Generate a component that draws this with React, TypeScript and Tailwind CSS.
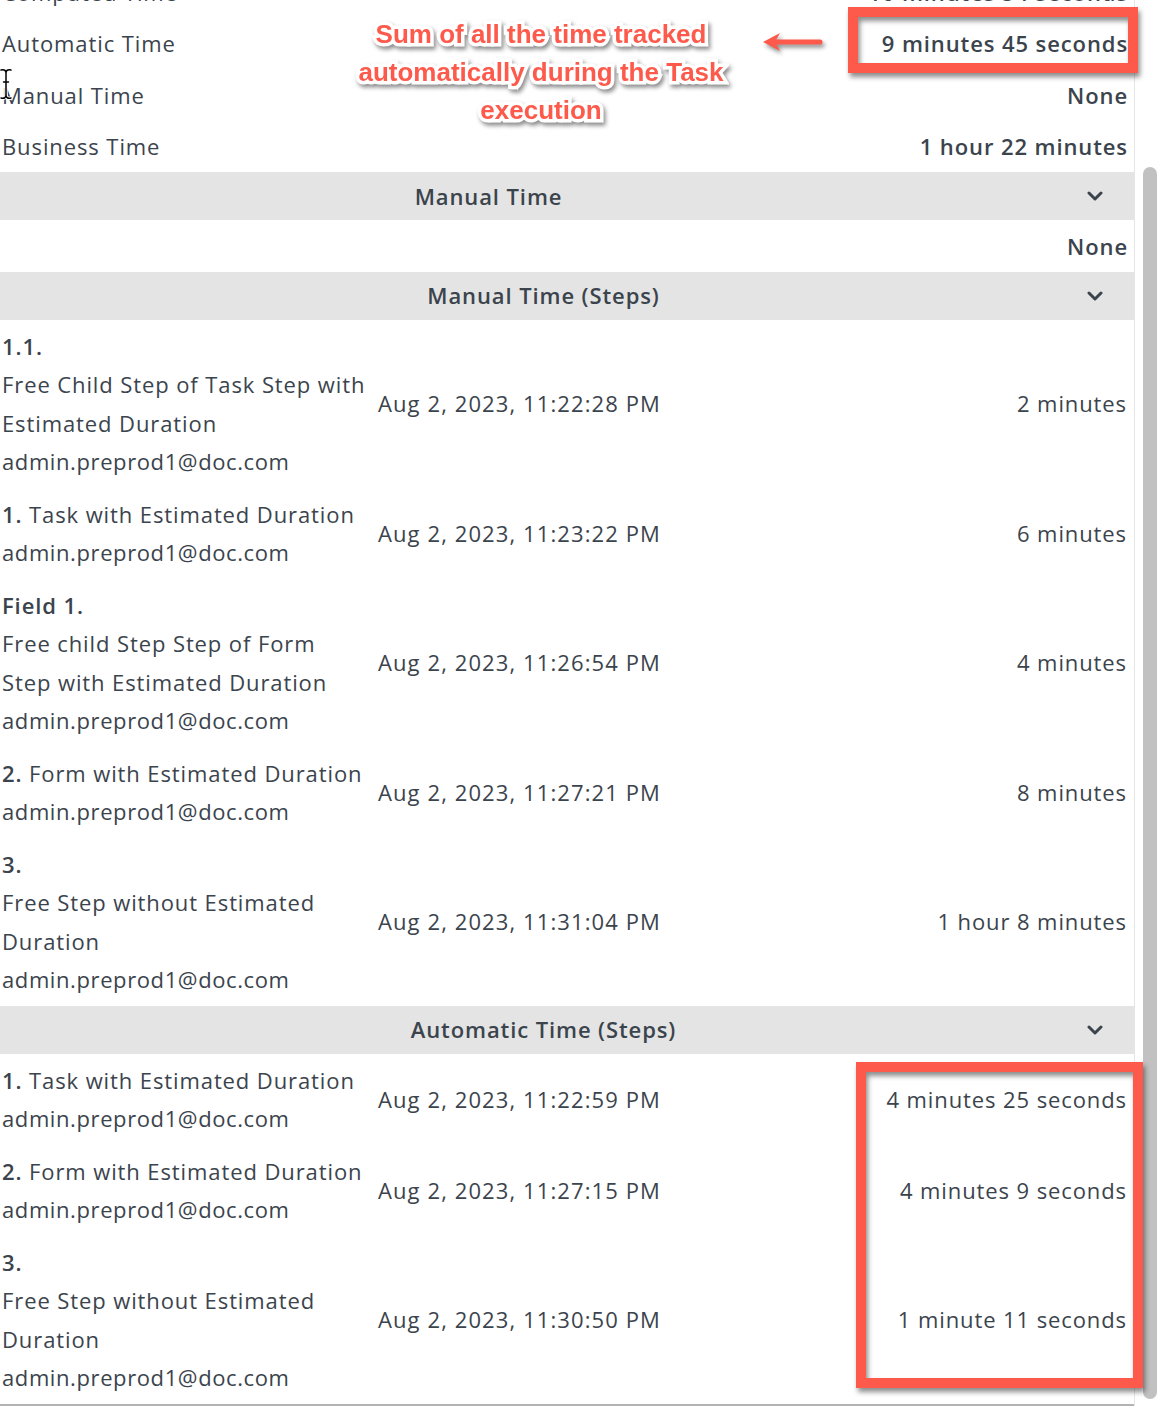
import React from "react";

interface StepRow {
  num: string;
  numOwnLine: boolean;
  lines: string[];
  date: string;
  duration: string;
}

const EMAIL = "admin.preprod1@doc.com";

const MANUAL_STEPS: StepRow[] = [
  { num: "1.1.", numOwnLine: true, lines: ["Free Child Step of Task Step with", "Estimated Duration"], date: "Aug 2, 2023, 11:22:28 PM", duration: "2 minutes" },
  { num: "1.", numOwnLine: false, lines: ["Task with Estimated Duration"], date: "Aug 2, 2023, 11:23:22 PM", duration: "6 minutes" },
  { num: "Field 1.", numOwnLine: true, lines: ["Free child Step Step of Form", "Step with Estimated Duration"], date: "Aug 2, 2023, 11:26:54 PM", duration: "4 minutes" },
  { num: "2.", numOwnLine: false, lines: ["Form with Estimated Duration"], date: "Aug 2, 2023, 11:27:21 PM", duration: "8 minutes" },
  { num: "3.", numOwnLine: true, lines: ["Free Step without Estimated", "Duration"], date: "Aug 2, 2023, 11:31:04 PM", duration: "1 hour 8 minutes" },
];

const AUTO_STEPS: StepRow[] = [
  { num: "1.", numOwnLine: false, lines: ["Task with Estimated Duration"], date: "Aug 2, 2023, 11:22:59 PM", duration: "4 minutes 25 seconds" },
  { num: "2.", numOwnLine: false, lines: ["Form with Estimated Duration"], date: "Aug 2, 2023, 11:27:15 PM", duration: "4 minutes 9 seconds" },
  { num: "3.", numOwnLine: true, lines: ["Free Step without Estimated", "Duration"], date: "Aug 2, 2023, 11:30:50 PM", duration: "1 minute 11 seconds" },
];

const SUMMARY = [
  { label: "Computed Time", value: "10 minutes 54 seconds" },
  { label: "Automatic Time", value: "9 minutes 45 seconds" },
  { label: "Manual Time", value: "None" },
  { label: "Business Time", value: "1 hour 22 minutes" },
];

function Chevron() {
  return (
    <svg width="16" height="10" viewBox="0 0 16 10" className="mr-[31px] shrink-0">
      <polyline points="2,2 8,8 14,2" fill="none" stroke="#3b444d" strokeWidth="3" strokeLinecap="round" strokeLinejoin="round" />
    </svg>
  );
}

function SectionHeader({ title, offset }: { title: string; offset?: boolean }) {
  return (
    <div className="flex h-12 items-center bg-[#e4e4e4]">
      <div className={`flex-1 text-center font-semibold ${offset ? "pr-[110px]" : ""}`}>{title}</div>
      <Chevron />
    </div>
  );
}

function StepRows({ rows }: { rows: StepRow[] }) {
  return (
    <div>
      {rows.map((r, i) => (
        <div key={i} className="flex items-center py-[7px] pl-[2px] pr-[7px]">
          <div className="w-[374px] shrink-0">
            {r.numOwnLine ? (
              <>
                <div className="font-semibold">{r.num}</div>
                {r.lines.map(l => <div key={l} className="whitespace-nowrap">{l}</div>)}
              </>
            ) : (
              <div className="whitespace-nowrap"><span className="font-semibold">{r.num}</span> {r.lines[0]}</div>
            )}
            <div className="tracking-[0.6px]">{EMAIL}</div>
          </div>
          <div className="flex-1 pl-[2px] tracking-[1.1px]">{r.date}</div>
          <div className="text-right">{r.duration}</div>
        </div>
      ))}
    </div>
  );
}

export default function App() {
  return (
    <div className="relative flex h-[1406px] overflow-hidden bg-white text-[22px] leading-[38.5px] tracking-[0.9px] text-[#3b444d] [font-family:'Open_Sans',Lato,sans-serif]">
      {/* Main content (scrolled) */}
      <div className="-mt-[34px] w-[1134px] shrink-0">
        {SUMMARY.map(s => (
          <div key={s.label} className="flex justify-between py-[6.5px] pl-[2px] pr-[6px]">
            <span>{s.label}</span>
            <span className="font-semibold">{s.value}</span>
          </div>
        ))}

        <SectionHeader title="Manual Time" offset />
        <div className="py-[6.5px] pr-[6px] text-right font-semibold">None</div>

        <SectionHeader title="Manual Time (Steps)" />
        <StepRows rows={MANUAL_STEPS} />

        <SectionHeader title="Automatic Time (Steps)" />
        <StepRows rows={AUTO_STEPS} />
        <div className="h-[3px] bg-[#b3b3b3]" />
      </div>

      {/* Scroll gutter */}
      <div className="flex-1 border-l border-[#e6e6e6]">
        <div className="ml-[8px] mt-[167px] h-[1232px] w-[14px] rounded-full bg-[#c1c1c1]" />
      </div>

      {/* Annotations */}
      <div className="absolute left-[340px] top-[15px] w-[402px] text-center text-[26px] font-bold leading-[38px] tracking-normal text-[#fd5a4b] [font-family:'Liberation_Sans',Arial,sans-serif] [-webkit-text-stroke:7px_white] [paint-order:stroke_fill] drop-shadow-[2px_3px_2px_rgba(0,0,0,0.45)]">
        Sum of all the time tracked
        <br />
        automatically during the Task
        <br />
        execution
      </div>

      <svg className="absolute left-[760px] top-[30px] drop-shadow-[2px_3px_2px_rgba(0,0,0,0.45)]" width="66" height="24" viewBox="0 0 66 24">
        <path d="M60 12 H14" stroke="#fd5a4b" strokeWidth="5" strokeLinecap="round" />
        <polygon points="3,12 20,3 15,12 20,21" fill="#fd5a4b" />
      </svg>

      <div className="absolute left-[848px] top-[7px] h-[66px] w-[290px] border-[10px] border-[#fd5a4b] shadow-[2px_4px_5px_rgba(0,0,0,0.45),inset_2px_4px_5px_rgba(0,0,0,0.45)]" />
      <div className="absolute left-[856px] top-[1062px] h-[326px] w-[287px] border-[10px] border-[#fd5a4b] shadow-[2px_4px_5px_rgba(0,0,0,0.45),inset_2px_4px_5px_rgba(0,0,0,0.45)]" />

      {/* Text cursor */}
      <svg className="absolute left-0 top-[68px]" width="12" height="32" viewBox="0 0 12 32">
        <g fill="none" strokeLinecap="round">
          <path d="M1 2 Q6 1 6 5 Q6 1 11 2 M6 5 V27 M1 30 Q6 31 6 27 Q6 31 11 30 M3.5 14 H8.5" stroke="white" strokeWidth="3.5" />
          <path d="M1 2 Q6 1 6 5 Q6 1 11 2 M6 5 V27 M1 30 Q6 31 6 27 Q6 31 11 30 M3.5 14 H8.5" stroke="black" strokeWidth="1.5" />
        </g>
      </svg>
    </div>
  );
}
